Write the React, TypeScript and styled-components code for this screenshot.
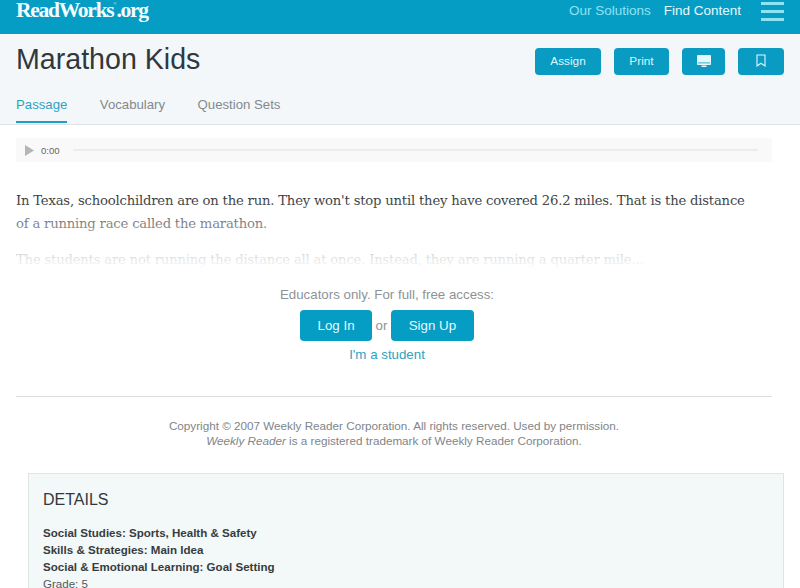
import styled, { createGlobalStyle } from "styled-components"

const Global = createGlobalStyle`
  html, body {
    margin: 0;
    padding: 0;
    height: 588px;
    overflow: hidden;
    background: #fff;
    font-family: "Liberation Sans", Arial, sans-serif;
  }
`

const TopBar = styled.header`
  height: 34px;
  background: #069dc5;
  display: flex;
  align-items: flex-start;
  justify-content: space-between;
  padding: 0 16px;
  overflow: hidden;
`

const Logo = styled.div`
  font-family: "Liberation Serif", serif;
  font-weight: 700;
  font-size: 21.5px;
  line-height: 20px;
  letter-spacing: -1.25px;
  color: #f4fcfe;

  sup {
    font-family: "Liberation Sans", sans-serif;
    font-weight: 400;
    font-size: 4px;
    line-height: 0;
    letter-spacing: 0;
    vertical-align: 12px;
    color: #bfeaf3;
  }
`

const TopNav = styled.nav`
  display: flex;
  align-items: flex-start;
  font-size: 13.5px;
  line-height: 22px;
`

const TopLink = styled.a<{ $muted?: boolean }>`
  color: ${(p) => (p.$muted ? "#8fe3f2" : "#e6f9fc")};
  margin-right: ${(p) => (p.$muted ? "13px" : "20px")};
`

const Burger = styled.div`
  width: 23px;
  display: flex;
  flex-direction: column;
  gap: 5px;
  margin-top: 2px;

  span {
    display: block;
    height: 3px;
    background: #8fe3f2;
  }
`

const SubHeader = styled.section`
  height: 90px;
  background: #f3f7f9;
  border-bottom: 1px solid #dfe3e5;
  padding: 0 16px;
  display: flex;
  flex-direction: column;
  justify-content: space-between;
`

const TitleRow = styled.div`
  display: flex;
  justify-content: space-between;
  align-items: flex-start;
`

const Title = styled.h1`
  margin: 8px 0 0;
  font-size: 28.6px;
  line-height: 34px;
  font-weight: 400;
  color: #30383d;
`

const Actions = styled.div`
  display: flex;
  gap: 13px;
  margin-top: 14px;
`

const ActionButton = styled.button<{ $w: number }>`
  width: ${(p) => p.$w}px;
  height: 27px;
  padding: 0 0 2px;
  border: 0;
  border-radius: 4px;
  background: #099bc2;
  color: #dff5fa;
  font-family: inherit;
  font-size: 11.8px;
  display: flex;
  align-items: center;
  justify-content: center;
`

const Tabs = styled.div`
  display: flex;
  gap: 32.5px;
  padding-bottom: 1px;
`

const Tab = styled.a<{ $active?: boolean }>`
  height: 36px;
  line-height: 36px;
  font-size: 13.2px;
  box-sizing: border-box;
  color: ${(p) => (p.$active ? "#2ba3c4" : "#83898d")};
  border-bottom: ${(p) => (p.$active ? "2px solid #1fa0c3" : "2px solid transparent")};
`

const Main = styled.main`
  padding: 13px 28px 0 16px;
`

const Audio = styled.div`
  height: 24px;
  background: #f9f9f9;
  display: flex;
  align-items: center;
  padding: 0 14px 0 9px;
  font-size: 9.6px;
  color: #666;
`

const Play = styled.svg`
  width: 9px;
  height: 11px;
  margin-right: 7px;
`

const Track = styled.div`
  flex: 1;
  height: 2px;
  background: #ececec;
  margin-left: 13px;
`

const Passage = styled.div`
  position: relative;
  height: 80px;
  margin-top: 27px;
  overflow: hidden;
  font-family: "DejaVu Serif", serif;
  font-size: 13.2px;
  letter-spacing: -0.2px;
  line-height: 23px;
  color: #34393d;

  p {
    margin: 0 0 13px;
    white-space: nowrap;
  }

  &::after {
    content: "";
    position: absolute;
    inset: 0;
    background: linear-gradient(rgba(255, 255, 255, 0) 10%, rgba(255, 255, 255, 1) 100%);
  }
`

const Gate = styled.div`
  margin-top: 18px;
  width: 742px;
  display: flex;
  flex-direction: column;
  align-items: center;
  font-size: 13.3px;
  color: #8e9396;
`

const GateText = styled.div`
  line-height: 16px;
`

const GateRow = styled.div`
  display: flex;
  align-items: center;
  gap: 3.5px;
  margin-top: 7px;
`

const GateButton = styled.button<{ $w: number }>`
  width: ${(p) => p.$w}px;
  height: 31px;
  padding: 0;
  border: 0;
  border-radius: 4px;
  background: #069dc5;
  color: #e6f8fb;
  font-family: inherit;
  font-size: 13.3px;
`

const StudentLink = styled.a`
  margin-top: 6px;
  line-height: 16px;
  color: #2ba3c4;
`

const Rule = styled.hr`
  border: 0;
  border-top: 1px solid #dcdfe1;
  width: 756px;
  margin: 33px 0 0;
`

const Copyright = styled.div`
  width: 756px;
  margin-top: 21px;
  text-align: center;
  font-size: 11.7px;
  line-height: 15px;
  color: #7f8589;

  em {
    font-style: italic;
  }
`

const Details = styled.section`
  margin: 25px -12px 0 12px;
  padding: 16px 14px 0;
  height: 200px;
  background: #f3f8f9;
  border: 1px solid #e1e4e6;
`

const DetailsTitle = styled.h2`
  margin: 0 0 15px;
  font-size: 16px;
  line-height: 20px;
  font-weight: 400;
  color: #30383d;
`

const DetailLine = styled.div<{ $bold?: boolean }>`
  font-size: 11.55px;
  line-height: 17px;
  font-weight: ${(p) => (p.$bold ? 700 : 400)};
  color: ${(p) => (p.$bold ? "#363c40" : "#52585c")};
`

export default function App() {
  return (
    <>
      <Global />
      <TopBar>
        <Logo>
          ReadWorks<sup>®</sup>.org
        </Logo>
        <TopNav>
          <TopLink $muted>Our Solutions</TopLink>
          <TopLink>Find Content</TopLink>
          <Burger>
            <span />
            <span />
            <span />
          </Burger>
        </TopNav>
      </TopBar>
      <SubHeader>
        <TitleRow>
          <Title>Marathon Kids</Title>
          <Actions>
            <ActionButton $w={66}>Assign</ActionButton>
            <ActionButton $w={55}>Print</ActionButton>
            <ActionButton $w={43}>
              <svg width="14" height="12" viewBox="0 0 14 12">
                <path d="M1 0h12a1 1 0 0 1 1 1v8a1 1 0 0 1-1 1H1a1 1 0 0 1-1-1V1a1 1 0 0 1 1-1z" fill="#e6f8fb" />
                <path d="M1 7.5h12v.8H1z" fill="#099bc2" />
                <path d="M4.5 10.5h5V12h-5z" fill="#e6f8fb" />
              </svg>
            </ActionButton>
            <ActionButton $w={46}>
              <svg width="10" height="13" viewBox="0 0 10 13">
                <path d="M1 1h8v11L5 9.2 1 12z" fill="none" stroke="#e6f8fb" strokeWidth="1.1" />
              </svg>
            </ActionButton>
          </Actions>
        </TitleRow>
        <Tabs>
          <Tab $active>Passage</Tab>
          <Tab>Vocabulary</Tab>
          <Tab>Question Sets</Tab>
        </Tabs>
      </SubHeader>
      <Main>
        <Audio>
          <Play viewBox="0 0 9 11">
            <path d="M0 0l9 5.5L0 11z" fill="#b5b5b5" />
          </Play>
          0:00
          <Track />
        </Audio>
        <Passage>
          <p>
            In Texas, schoolchildren are on the run. They won't stop until they have covered 26.2 miles. That is the distance
            <br />
            of a running race called the marathon.
          </p>
          <p>The students are not running the distance all at once. Instead, they are running a quarter mile...</p>
        </Passage>
        <Gate>
          <GateText>Educators only. For full, free access:</GateText>
          <GateRow>
            <GateButton $w={72}>Log In</GateButton>
            or
            <GateButton $w={83}>Sign Up</GateButton>
          </GateRow>
          <StudentLink>I'm a student</StudentLink>
        </Gate>
        <Rule />
        <Copyright>
          Copyright © 2007 Weekly Reader Corporation. All rights reserved. Used by permission.
          <br />
          <em>Weekly Reader</em> is a registered trademark of Weekly Reader Corporation.
        </Copyright>
        <Details>
          <DetailsTitle>DETAILS</DetailsTitle>
          <DetailLine $bold>Social Studies: Sports, Health &amp; Safety</DetailLine>
          <DetailLine $bold>Skills &amp; Strategies: Main Idea</DetailLine>
          <DetailLine $bold>Social &amp; Emotional Learning: Goal Setting</DetailLine>
          <DetailLine>Grade: 5</DetailLine>
        </Details>
      </Main>
    </>
  )
}
